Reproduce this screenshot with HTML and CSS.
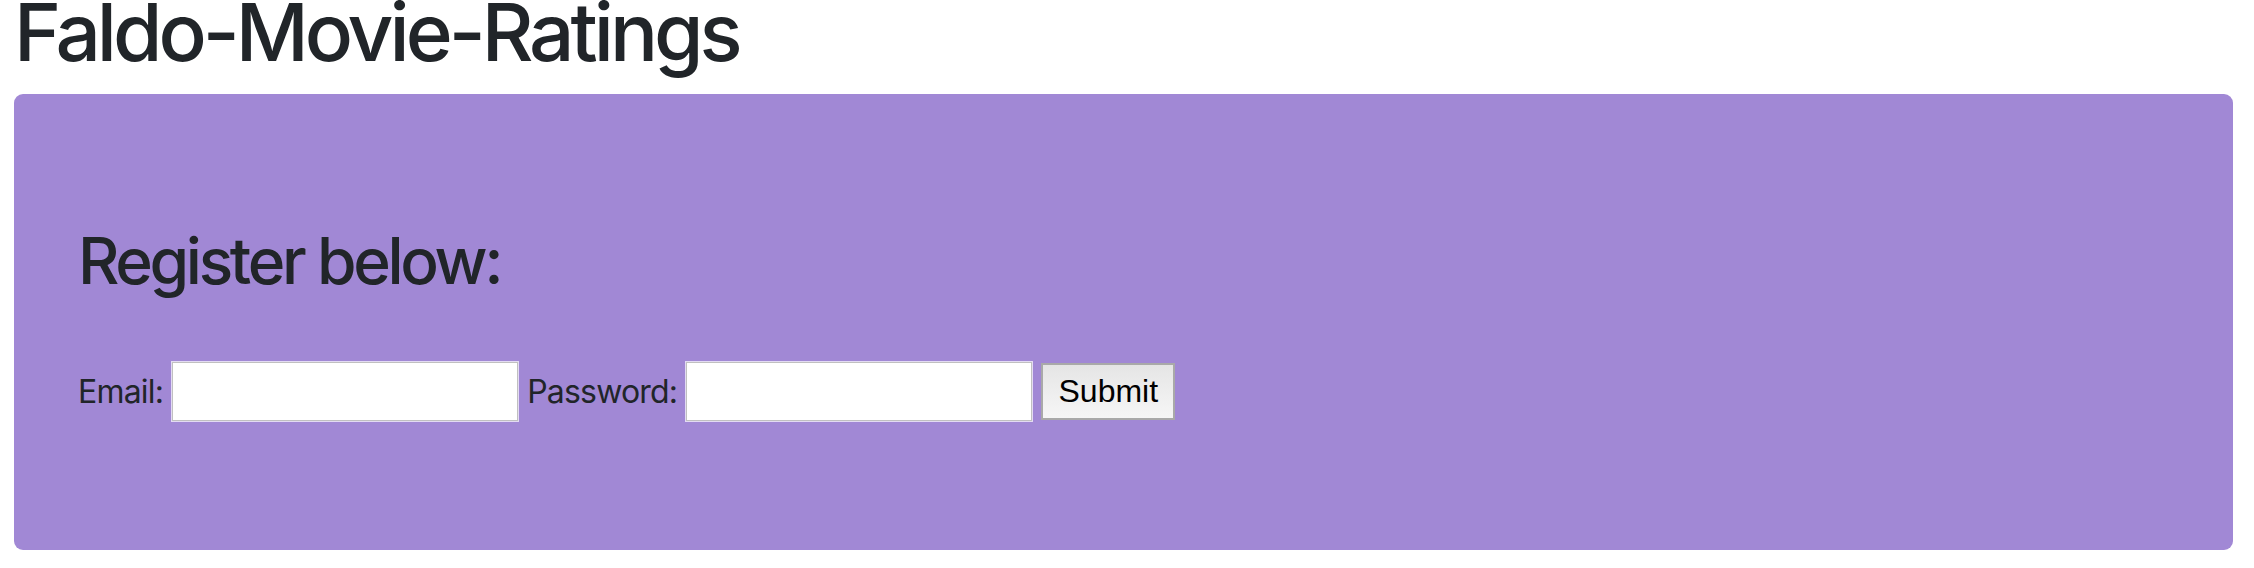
FILE: index.html
```html
<!DOCTYPE html>
<html lang="en">
<head>
<meta charset="utf-8">
<title>Faldo-Movie-Ratings</title>
<link rel="stylesheet" href="styles.css">
</head>
<body>
<h1 class="title">Faldo-Movie-Ratings</h1>
<div class="panel">
  <h2 class="panel-title">Register below:</h2>
  <form class="reg-form">
    <label class="field-label" for="email">Email:</label>
    <input class="field-input" id="email" type="text">
    <label class="field-label" for="password">Password:</label>
    <input class="field-input" id="password" type="password">
    <button class="submit-btn" type="button">Submit</button>
  </form>
</div>
</body>
</html>
```

FILE: styles.css
```css
html, body {
  margin: 0;
  padding: 0;
  background: #ffffff;
}
body {
  font-family: Inter, "Noto Sans", sans-serif;
  color: #212529;
}
.title {
  margin: 0;
  padding-left: 14px;
  font-size: 80px;
  font-weight: 500;
  line-height: 64px;
  letter-spacing: -0.05em;
}
.panel {
  margin: 30px 21px 0 14px;
  padding: 128px 64px 129px;
  background: #a188d5;
  border-radius: 9px;
}
.panel-title {
  margin: 0 0 63px;
  font-size: 64px;
  font-weight: 500;
  line-height: 77px;
  letter-spacing: -0.052em;
}
.reg-form {
  display: flex;
  align-items: center;
  gap: 9px;
  height: 59px;
}
.field-label {
  font-size: 32px;
  line-height: 48px;
  letter-spacing: -0.025em;
}
.field-input {
  box-sizing: border-box;
  width: 346px;
  height: 59px;
  margin: 0;
  border: 1px solid #c0c0c0;
  box-shadow: 0 0 0 1px rgba(255, 255, 255, 0.7);
  background: #ffffff;
}
.submit-btn {
  box-sizing: border-box;
  width: 134px;
  height: 57px;
  margin: 0;
  padding: 0;
  border: 2px solid #a9a9a9;
  background: linear-gradient(#e5e5e5, #f6f6f6);
  font-family: "Liberation Sans", Arial, sans-serif;
  font-size: 32px;
  color: #000000;
}
```
